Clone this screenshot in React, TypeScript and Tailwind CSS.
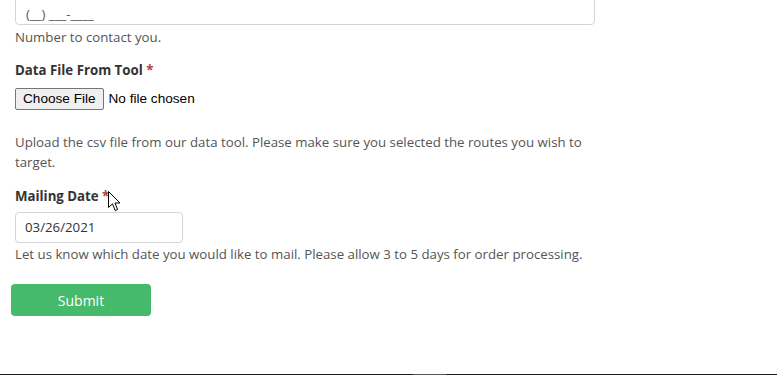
import React from "react";

export default function App() {
  const font = { fontFamily: '"Open Sans", "Noto Sans", sans-serif' };
  return (
    <div className="w-[777px] h-[375px] bg-white overflow-hidden flex flex-col relative" style={font}>
      <div className="flex-1 flex flex-col">
        <div className="pl-[15px] w-[595px] flex flex-col">
          <div className="mt-[-9px] h-[34px] border border-[#d4d4d4] rounded-[4px] flex items-start pt-[12px] px-[10px] text-[13.25px] leading-[20px] text-[#555]">
            (__) ___-____
          </div>
          <div className="mt-[2px] h-[20px] leading-[20px] text-[13.25px] text-[#555]">Number to contact you.</div>
          <div className="mt-[13px] h-[20px] leading-[20px] text-[13.25px] font-bold text-[#333]">
            Data File From Tool <span className="text-[#a94442]">*</span>
          </div>
          <div className="mt-[8px] flex items-center h-[22px]" style={{ fontFamily: '"Liberation Sans", Arial, sans-serif' }}>
            <div className="h-[22px] px-[7px] border border-[#767676] rounded-[2px] bg-[#efefef] text-[13.6px] text-black flex items-center">Choose File</div>
            <span className="ml-[5px] text-[13.6px] text-black">No file chosen</span>
          </div>
          <div className="mt-[22px] leading-[20px] text-[13.25px] text-[#555]">
            Upload the csv file from our data tool. Please make sure you selected the routes you wish to
            <br />
            target.
          </div>
          <div className="mt-[14px] h-[20px] leading-[20px] text-[13.25px] font-bold text-[#333]">
            Mailing Date <span className="text-[#a94442]">*</span>
          </div>
          <div className="mt-[6px] w-[168px] h-[31px] border border-[#d4d4d4] rounded-[4px] flex items-center px-[9px] text-[13.25px] text-[#333]">
            03/26/2021
          </div>
          <div className="mt-[1px] h-[20px] leading-[20px] text-[13.25px] text-[#555]">
            Let us know which date you would like to mail. Please allow 3 to 5 days for order processing.
          </div>
        </div>
        <div className="pl-[11px] mt-[20px]">
          <div className="w-[140px] h-[32px] bg-[#45ba6b] rounded-[4px] text-white text-[14px] flex items-center justify-center">
            Submit
          </div>
        </div>
      </div>
      <div className="h-[1px] w-full bg-[#1c1c1c] flex">
        <div className="ml-[413px] w-[33px] bg-[#555]" />
      </div>
      <svg className="absolute left-[108px] top-[191px]" width="14" height="22" viewBox="0 0 14 22">
        <path d="M0.5 0.5 L0.5 16.5 L4.5 12.8 L7.2 19.5 L9.6 18.5 L7 12 L12 12 Z" fill="white" stroke="black" strokeWidth="1" strokeLinejoin="miter" />
      </svg>
    </div>
  );
}
